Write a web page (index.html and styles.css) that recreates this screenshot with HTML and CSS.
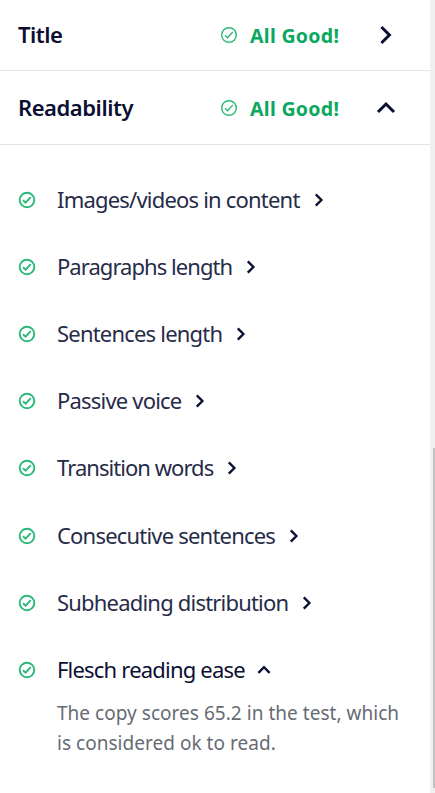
FILE: index.html
```
<!DOCTYPE html>
<html lang="en">
<head>
    <meta charset="UTF-8">
    <meta name="viewport" content="width=device-width, initial-scale=1.0">
    <title>Readability</title>
    <link rel="stylesheet" href="styles.css">
</head>

<body>
    <svg class="sprite">
        <symbol id="check" viewBox="0 0 18 18">
            <circle cx="9" cy="9" r="7.3"/>
            <path d="M5 9.2l2.6 2.5 5.2-5.6"/>
        </symbol>
        <symbol id="right" viewBox="0 0 20 20"><path d="M5.4 2l8 8-8 8"/></symbol>
        <symbol id="up" viewBox="0 0 20 20"><path d="M2 14l8-8 8 8"/></symbol>
    </svg>
    <div class="panel">
        <div class="content">
            <div class="section">
                <h2>Title</h2>
                <svg class="check thin"><use href="#check"/></svg>
                <span class="status">All Good!</span>
                <svg class="arrow"><use href="#right"/></svg>
            </div>
            <div class="section open">
                <h2>Readability</h2>
                <svg class="check thin"><use href="#check"/></svg>
                <span class="status">All Good!</span>
                <svg class="arrow"><use href="#up"/></svg>
            </div>
            <ul class="list">
                <li class="item"><svg class="check"><use href="#check"/></svg><span>Images/videos in content</span><svg class="arrow small"><use href="#right"/></svg></li>
                <li class="item"><svg class="check"><use href="#check"/></svg><span class="tight">Paragraphs length</span><svg class="arrow small"><use href="#right"/></svg></li>
                <li class="item"><svg class="check"><use href="#check"/></svg><span>Sentences length</span><svg class="arrow small"><use href="#right"/></svg></li>
                <li class="item"><svg class="check"><use href="#check"/></svg><span>Passive voice</span><svg class="arrow small"><use href="#right"/></svg></li>
                <li class="item"><svg class="check"><use href="#check"/></svg><span class="tight">Transition words</span><svg class="arrow small"><use href="#right"/></svg></li>
                <li class="item"><svg class="check"><use href="#check"/></svg><span>Consecutive sentences</span><svg class="arrow small"><use href="#right"/></svg></li>
                <li class="item"><svg class="check"><use href="#check"/></svg><span>Subheading distribution</span><svg class="arrow small"><use href="#right"/></svg></li>
                <li class="item active"><svg class="check"><use href="#check"/></svg><span>Flesch reading ease</span><svg class="arrow small"><use href="#up"/></svg></li>
            </ul>
            <p class="text">The copy scores 65.2 in the test, which<br>is considered ok to read.</p>
        </div>
        <div class="scroll">
            <div class="thumb"></div>
        </div>
    </div>
</body>
</html>
```
FILE: styles.css
```
body {
    margin: 0;
    background-color: #fff;
    font-family: "Noto Sans", sans-serif;
    color: #0b1033;
}
.sprite {
    display: none;
}
.panel {
    display: flex;
    height: 793px;
    overflow: hidden;
}
.content {
    width: 430px;
}
.section {
    display: grid;
    grid-template-columns: 202px 30px 126px 24px;
    align-items: center;
    box-sizing: border-box;
    height: 71px;
    padding-left: 18px;
    border-bottom: 1px solid #e4e5e6;
}
.section.open {
    height: 74px;
}
h2 {
    margin: 0;
    padding-bottom: 2px;
    font-size: 22px;
    font-weight: 600;
    line-height: 30px;
    letter-spacing: -0.45px;
}
.status {
    padding-top: 1px;
    color: #0aa860;
    font-size: 19.5px;
    font-weight: 700;
    line-height: 26px;
    letter-spacing: 0.3px;
}
.open .status {
    padding-top: 3px;
}
.check {
    width: 18px;
    height: 18px;
    fill: none;
    stroke: #2bb978;
    stroke-width: 1.9;
}
.thin {
    stroke-width: 1.4;
}
.arrow {
    width: 20px;
    height: 20px;
    fill: none;
    stroke: #0b1033;
    stroke-width: 3;
}
.small {
    width: 14px;
    height: 14px;
    margin-left: 12px;
    stroke-width: 3.4;
}
.list {
    margin: 0;
    padding: 21px 0 0 18px;
    list-style: none;
}
.item {
    display: flex;
    align-items: center;
    height: 67.2px;
    font-size: 22px;
    color: #262b49;
    letter-spacing: -0.8px;
    white-space: nowrap;
}
.item span {
    padding-bottom: 2px;
}
.item .tight {
    letter-spacing: -0.95px;
}
.item .check {
    margin-right: 21px;
}
.item.active {
    color: #0b1033;
}
.text {
    margin: -6px 0 0 57px;
    font-size: 19px;
    line-height: 30px;
    letter-spacing: 0.03px;
    color: #666b73;
    white-space: nowrap;
}
.scroll {
    box-sizing: border-box;
    width: 5px;
    padding: 448px 0 0 3px;
    background-color: #f0f0f0;
}
.thumb {
    height: 340px;
    background-color: #c1c1c1;
}
```
